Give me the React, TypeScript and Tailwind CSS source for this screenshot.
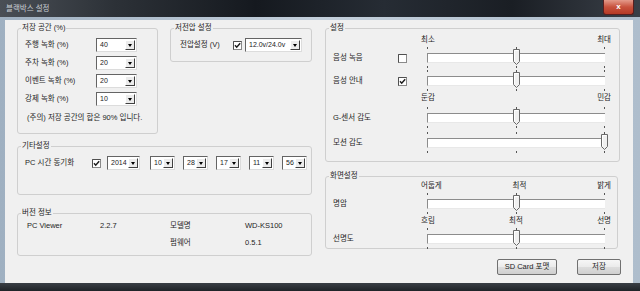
import * as React from "react";

const txt = "text-[7.5px] leading-[12px] text-[#1e1e1e]";

function Group({
  title,
  className,
  children,
}: {
  title: string;
  className: string;
  children?: React.ReactNode;
}) {
  return (
    <fieldset className={`rounded-[3px] border border-[#cfcfcf] ${className}`}>
      <legend className={`ml-[3px] px-[1px] ${txt}`}>{title}</legend>
      {children}
    </fieldset>
  );
}

function Combo({ value, w }: { value: string; w: string }) {
  return (
    <div
      className={`flex h-[14px] shrink-0 border border-t-[#646464] border-l-[#646464] border-r-[#dcdcdc] border-b-[#dcdcdc] bg-white ${w}`}
    >
      <span className="flex-1 pl-[3px] text-[7px] leading-[12px] text-[#222]">{value}</span>
      <span className="my-[1px] mr-[1px] flex w-[10px] items-center justify-center border border-t-white border-l-white border-r-[#404040] border-b-[#404040] bg-[#ececec]">
        <span className="border-x-[2.5px] border-t-[3px] border-x-transparent border-t-black" />
      </span>
    </div>
  );
}

function Check({ on }: { on?: boolean }) {
  return (
    <svg width="9" height="9" viewBox="0 0 9 9" className="shrink-0">
      <rect x="0.5" y="0.5" width="8" height="8" fill="white" stroke="#8a8a8a" />
      <path d="M0.5 8.5 V0.5 H8.5" fill="none" stroke="#505050" />
      {on ? <path d="M2 4.3 L3.7 6.2 L7.2 2.3" stroke="#1e1e1e" strokeWidth="1.5" fill="none" /> : null}
    </svg>
  );
}

function Slider({ pos }: { pos: number }) {
  const ticks = [4, 93, 181];
  const x = 4 + pos * 177;
  return (
    <div className="relative h-[22px] w-[186px] shrink-0">
      {ticks.map((t) => (
        <React.Fragment key={t}>
          <span className="absolute top-0 h-[2px] w-px bg-[#555]" style={{ left: t }} />
          <span className="absolute top-[19px] h-[2px] w-px bg-[#555]" style={{ left: t }} />
        </React.Fragment>
      ))}
      <div className="mx-[4px] mt-[6px] h-[10px] border-t border-l border-[#8c8c8c] border-b border-b-[#e8e8e8] bg-white" />
      <svg className="absolute top-[2px]" style={{ left: x - 3 }} width="7" height="17" viewBox="0 0 7 17">
        <path d="M0.5 0.5 H6.5 V12.5 L3.5 15.5 L0.5 12.5 Z" fill="#f0f0f0" stroke="#6a6a6a" />
        <path d="M1.5 12 V1.5 H5.5" fill="none" stroke="#ffffff" />
      </svg>
    </div>
  );
}

function SettingRow({ label, check, pos }: { label: string; check?: "on" | "off"; pos: number }) {
  return (
    <div className="flex items-center">
      <span className={`w-[65px] ${txt}`}>{label}</span>
      <span className="w-[25px]">{check ? <Check on={check === "on"} /> : null}</span>
      <Slider pos={pos} />
    </div>
  );
}

function ScaleLabels({ items }: { items: string[] }) {
  return (
    <div className={`ml-[88px] flex w-[190px] justify-between ${txt}`}>
      {items.map((s) => (
        <span key={s}>{s}</span>
      ))}
    </div>
  );
}

function Button({ label, w }: { label: string; w: string }) {
  return (
    <div
      className={`flex h-[16px] items-center justify-center rounded-[2px] border border-[#707070] bg-[linear-gradient(180deg,#f6f6f6_0%,#ebebeb_50%,#dddddd_51%,#cfcfcf_100%)] ${w} ${txt}`}
    >
      {label}
    </div>
  );
}

export default function App() {
  const storage = [
    ["주행 녹화 (%)", "40"],
    ["주차 녹화 (%)", "20"],
    ["이벤트 녹화 (%)", "20"],
    ["강제 녹화 (%)", "10"],
  ];

  return (
    <div className="flex h-[291px] w-[640px] flex-col overflow-hidden bg-[#24292f] font-['Liberation_Sans','Noto_Sans_CJK_KR',sans-serif]">
      {/* title bar */}
      <div className="relative flex h-[17px] items-center bg-[linear-gradient(90deg,#4a4f56_0%,#2c3137_18%,#15191f_40%,#262c34_60%,#1a1e24_80%,#3a4048_100%)] pl-[6px]">
        <span className="text-[7.5px] leading-[12px] text-[#c9ced4]">블랙박스 설정</span>
        <div className="absolute right-[6px] top-0 flex h-[15px] w-[31px] items-center justify-center rounded-b-[3px] border border-t-0 border-[#5a1f1f] bg-[linear-gradient(180deg,#e49a8a_0%,#c8523d_50%,#b53a26_100%)]">
          <span className="text-[8px] font-bold leading-[10px] text-white">x</span>
        </div>
      </div>

      {/* frame + client */}
      <div className="bg-[linear-gradient(90deg,#9fb0c1_0%,#c3cfdb_50%,#aebdcc_100%)] pl-[5px] pr-[7px] pt-[3px]">
        <div className="flex h-[263px] w-[628px] gap-[13px] bg-[#f0f0f0] pl-[12px] pt-[2px]">
          {/* left column */}
          <div className="flex w-[295px] flex-col">
            <div className="flex gap-[12px]">
              <Group title="저장 공간 (%)" className="h-[112px] w-[141px]">
                <div className="flex flex-col pl-[7px] pt-[2px]">
                  {storage.map(([l, v]) => (
                    <div key={l} className="flex h-[18px] items-center">
                      <span className={`w-[71px] ${txt}`}>{l}</span>
                      <Combo value={v} w="w-[41px]" />
                    </div>
                  ))}
                  <div className={`mt-[4px] pl-[2px] ${txt}`}>(주의) 저장 공간의 합은 90% 입니다.</div>
                </div>
              </Group>
              <Group title="저전압 설정" className="h-[40px] w-[142px]">
                <div className="flex items-center pl-[9px] pt-[4px]">
                  <span className={`w-[53px] ${txt}`}>전압설정 (V)</span>
                  <span className="w-[12px]">
                    <Check on />
                  </span>
                  <Combo value="12.0v/24.0v" w="w-[57px]" />
                </div>
              </Group>
            </div>

            <Group title="기타설정" className="mt-[6px] h-[55px] w-full">
              <div className="flex items-center pl-[7px] pt-[4px]">
                <span className={`w-[67px] ${txt}`}>PC 시간 동기화</span>
                <span className="w-[15px]">
                  <Check on />
                </span>
                <Combo value="2014" w="w-[33px]" />
                <div className="ml-[10px] flex gap-[8px]">
                  {["10", "28", "17", "11", "56"].map((v) => (
                    <Combo key={v} value={v} w="w-[25px]" />
                  ))}
                </div>
              </div>
            </Group>

            <Group title="버전 정보" className="mt-[12px] h-[49px] w-full">
              <div className={`grid grid-cols-[73px_70px_75px_1fr] pl-[9px] pt-[1px] ${txt}`}>
                <span className="h-[17px]">PC Viewer</span>
                <span>2.2.7</span>
                <span>모델명</span>
                <span>WD-KS100</span>
                <span />
                <span />
                <span>펌웨어</span>
                <span>0.5.1</span>
              </div>
            </Group>
          </div>

          {/* right column */}
          <div className="flex w-[296px] flex-col">
            <Group title="설정" className="h-[140px] w-[295px]">
              <div className="flex flex-col pl-[7px]">
                <ScaleLabels items={["최소", "최대"]} />
                <div className="mt-[1px]">
                  <SettingRow label="음성 녹음" check="off" pos={0.5} />
                </div>
                <div className="mt-[1px]">
                  <SettingRow label="음성 안내" check="on" pos={0.5} />
                </div>
                <ScaleLabels items={["둔감", "민감"]} />
                <div className="mt-[3px]">
                  <SettingRow label="G-센서 감도" pos={0.5} />
                </div>
                <div className="mt-[3px]">
                  <SettingRow label="모션 감도" pos={1} />
                </div>
              </div>
            </Group>

            <Group title="화면설정" className="mt-[8px] h-[79px] w-[293px]">
              <div className="-mt-[2px] flex flex-col pl-[7px]">
                <ScaleLabels items={["어둡게", "최적", "밝게"]} />
                <div className="mt-[1px]">
                  <SettingRow label="명암" pos={0.5} />
                </div>
                <ScaleLabels items={["흐림", "최적", "선명"]} />
                <div className="mt-[1px]">
                  <SettingRow label="선명도" pos={0.5} />
                </div>
              </div>
            </Group>

            <div className="mt-[10px] flex justify-end gap-[20px]">
              <Button label="SD Card 포맷" w="w-[60px]" />
              <Button label="저장" w="w-[44px]" />
            </div>
          </div>
        </div>
      </div>

      <div className="h-[8px] bg-[linear-gradient(180deg,#3a3f45_0%,#1f2327_100%)]" />
    </div>
  );
}
